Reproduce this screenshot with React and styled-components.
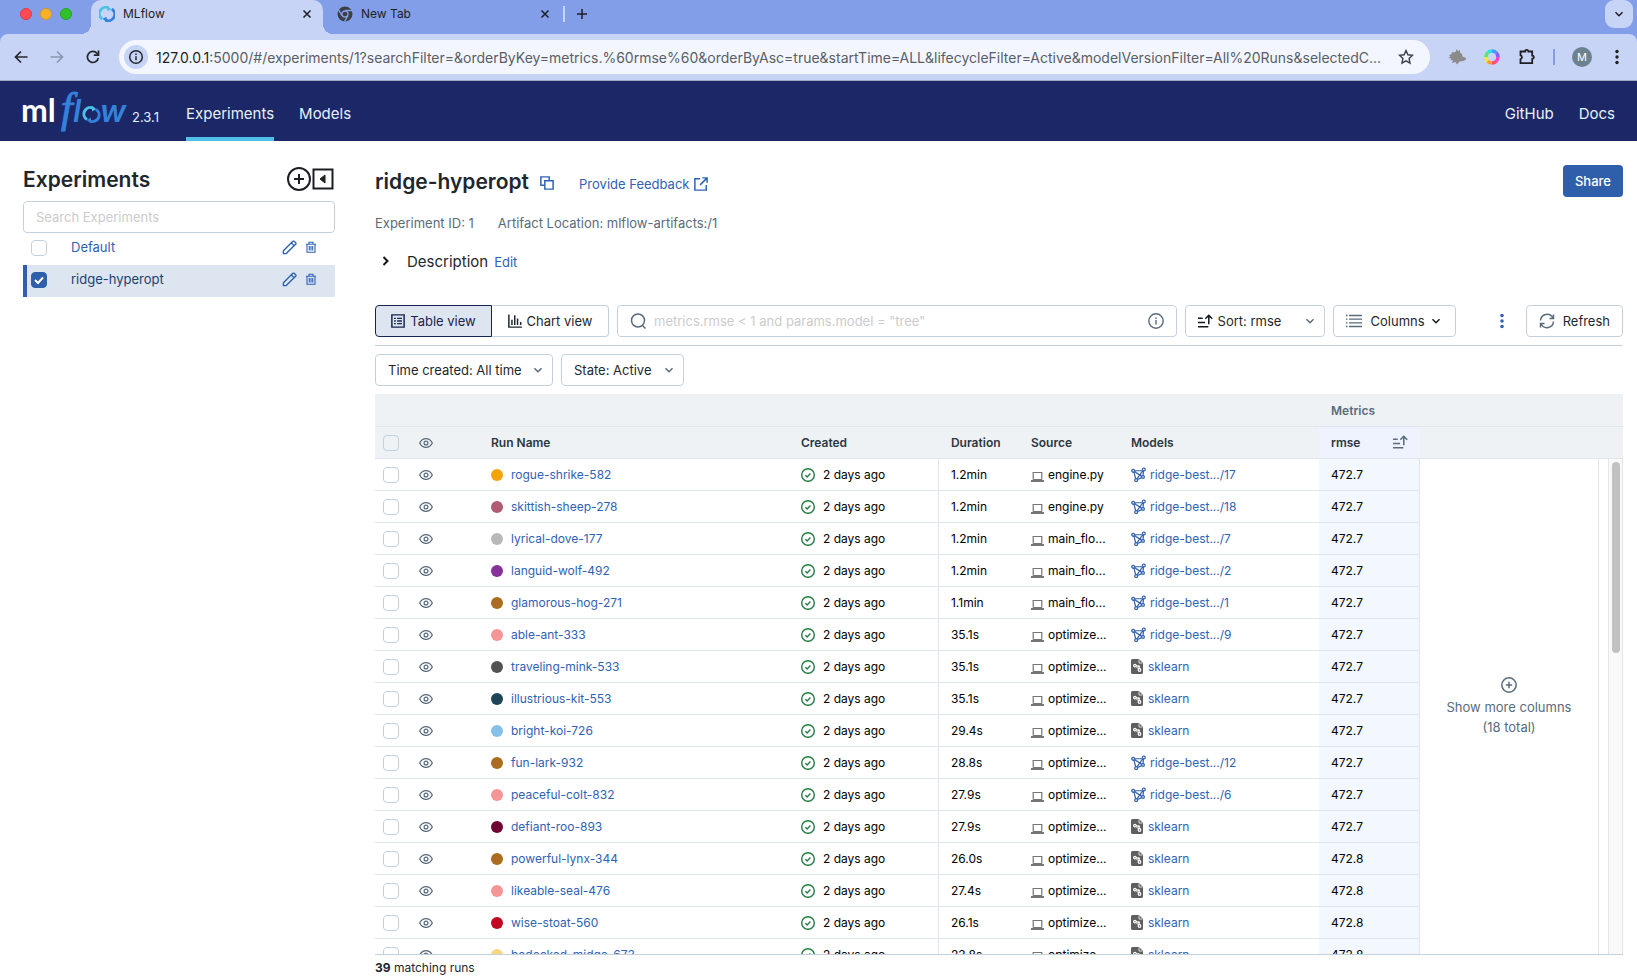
import React from 'react';
import styled, { createGlobalStyle, css } from 'styled-components';

const c = {
  navy: '#1b2766',
  link: '#2f62b4',
  blue: '#2f5faa',
  border: '#c3d1df',
  line: '#dfe6ed',
  head: '#eef2f5',
  gray: '#5a6b7c',
  text: '#1f272d',
  logoBlue: '#3581dc',
  logoCyan: '#4fc0e8',
};

const GlobalStyle = createGlobalStyle`
  * { box-sizing: border-box; }
  html, body { margin: 0; background: #fff; }
  body, button, input, select {
    font-family: Inter, "Liberation Sans", sans-serif;
    font-size: 13px;
    color: ${c.text};
  }
  button { background: none; border: 0; padding: 0; display: inline-flex; align-items: center; }
  a { color: ${c.link}; text-decoration: none; }
  svg { display: block; flex: none; }
  h1, h2, p { margin: 0; }
`;

/* ---------- browser frame ---------- */

const Page = styled.div`
  height: 100vh;
  display: flex;
  flex-direction: column;
  overflow: hidden;
`;

const TabStrip = styled.div`
  height: 34px;
  flex: none;
  background: #839ee8;
  display: flex;
  align-items: stretch;
  padding-right: 4px;
`;

const WindowLights = styled.div`
  width: 91px;
  display: flex;
  gap: 8px;
  padding: 8px 0 0 20px;
`;

const Light = styled.span`
  width: 12px;
  height: 12px;
  border-radius: 50%;
  background: ${(p) => p.$fill};
  border: 1px solid ${(p) => p.$edge};
`;

const Tab = styled.div`
  position: relative;
  display: flex;
  align-items: center;
  gap: 8px;
  height: 34px;
  padding: 0 10px 6px 8px;
  width: ${(p) => (p.$active ? 232 : 238)}px;
  ${(p) =>
    p.$active
      ? css`
          background: #c8d4f6;
          border-radius: 10px 10px 0 0;
          &::before,
          &::after {
            content: '';
            position: absolute;
            bottom: 0;
            width: 10px;
            height: 10px;
          }
          &::before {
            left: -10px;
            background: radial-gradient(circle at 0 0, transparent 10px, #c8d4f6 10px);
          }
          &::after {
            right: -10px;
            background: radial-gradient(circle at 100% 0, transparent 10px, #c8d4f6 10px);
          }
        `
      : css`
          padding-left: 14px;
        `}
`;

const TabTitle = styled.span`
  flex: 1;
  font-size: 12px;
  line-height: 16px;
  padding-bottom: 1px;
  color: #202124;
`;

const NewTab = styled.div`
  display: flex;
  align-items: center;
  gap: 10px;
  padding-bottom: 6px;
  flex: 1;
  margin-left: 2px;
`;

const Divider = styled.span`
  width: 2px;
  height: 16px;
  background: ${(p) => p.$color};
`;

const TabSearch = styled.button`
  width: 28px;
  height: 28px;
  border-radius: 9px;
  background: #c8d4f6;
  justify-content: center;
`;

const ToolbarBack = styled.div`
  background: #839ee8;
  flex: none;
`;

const BrowserBar = styled.div`
  height: 47px;
  background: #c8d4f6;
  border-bottom: 1px solid #9aa6c2;
  border-radius: 8px 8px 0 0;
  display: flex;
  align-items: center;
  padding: 0 12px 0 13px;
`;

const NavButtons = styled.div`
  display: flex;
  gap: 20px;
  width: 106px;
`;

const AddressBar = styled.div`
  flex: 1;
  min-width: 0;
  height: 34px;
  border-radius: 17px;
  background: #f3f6fe;
  display: flex;
  align-items: center;
  padding: 0 16px 0 5px;
`;

const SiteInfo = styled.button`
  width: 24px;
  height: 24px;
  border-radius: 50%;
  background: #c8d4f6;
  justify-content: center;
  flex: none;
`;

const Url = styled.div`
  flex: 1;
  min-width: 0;
  overflow: hidden;
  white-space: nowrap;
  margin: 0 8px;
  font-size: 14px;
  color: #5a5e66;
  b { font-weight: 400; color: #1d1f23; }
`;

const Extensions = styled.div`
  display: flex;
  align-items: center;
  gap: 17px;
  margin-left: 18px;
`;

const Avatar = styled.button`
  width: 20px;
  height: 20px;
  border-radius: 50%;
  background: #6d8290;
  color: #fff;
  font-size: 11px;
  justify-content: center;
`;

/* ---------- MLflow header ---------- */

const Header = styled.header`
  height: 60px;
  flex: none;
  background: ${c.navy};
  display: flex;
  align-items: stretch;
  padding: 0 22px;
`;

const Brand = styled.a`
  display: flex;
  align-items: flex-end;
  gap: 2px;
  width: 164px;
  padding-bottom: 4px;
`;

const Version = styled.span`
  font-size: 13px;
  line-height: 16px;
  color: #e7f1fb;
  padding-bottom: 12px;
`;

const Nav = styled.nav`
  display: flex;
  gap: 25px;
  &:last-child { margin-left: auto; }
`;

const NavLink = styled.a`
  display: flex;
  align-items: center;
  font-size: 15px;
  color: #e7f1fb;
  padding-top: 8px;
  border-bottom: 4px solid ${(p) => (p.$active ? c.logoCyan : 'transparent')};
`;

/* ---------- sidebar ---------- */

const Body = styled.div`
  flex: 1;
  min-height: 0;
  display: flex;
`;

const Sidebar = styled.aside`
  width: 335px;
  flex: none;
  padding: 24px 0 0 23px;
`;

const SidebarHead = styled.div`
  display: flex;
  align-items: center;
  height: 28px;
  margin-bottom: 8px;
  padding-right: 1px;
  h2 { flex: 1; font-size: 21px; font-weight: 600; line-height: 28px; padding-top: 2px; }
  button + button { margin-left: 1px; }
`;

const inputBox = css`
  height: 32px;
  border: 1px solid ${c.border};
  border-radius: 4px;
  background: #fff;
`;

const SearchExperiments = styled.input`
  ${inputBox}
  display: block;
  width: 100%;
  padding: 0 12px;
  &::placeholder { color: #ccc; opacity: 1; }
`;

const Checkbox = styled.input.attrs({ type: 'checkbox' })`
  appearance: none;
  display: block;
  flex: none;
  width: 16px;
  height: 16px;
  margin: 0;
  border: 1px solid ${c.border};
  border-radius: 4px;
  &:checked {
    border-color: ${c.blue};
    background: ${c.blue};
  }
`;

const CheckHolder = styled.span`
  position: relative;
  display: block;
  svg { position: absolute; left: 0; top: 0; pointer-events: none; }
`;

const ExperimentRow = styled.div`
  display: flex;
  align-items: center;
  height: 32px;
  padding: 0 18px 2px 4px;
  border-left: 4px solid ${(p) => (p.$active ? c.blue : 'transparent')};
  background: ${(p) => (p.$active ? '#dde5f0' : 'transparent')};
  a, button { padding-bottom: 2px; }
  a {
    flex: 1;
    margin-left: 24px;
    color: ${(p) => (p.$active ? '#1c4170' : c.link)};
  }
  button + button { margin-left: 8px; }
`;

/* ---------- experiment page ---------- */

const Main = styled.main`
  flex: 1;
  min-width: 0;
  display: flex;
  flex-direction: column;
  padding: 24px 14px 0 40px;
`;

const TitleRow = styled.div`
  display: flex;
  align-items: center;
  height: 32px;
  h1 { font-size: 21px; font-weight: 600; line-height: 30px; padding-top: 2px; margin-right: 11px; }
`;

const CopyButton = styled.button`
  padding-top: 4px;
`;

const Feedback = styled.a`
  display: flex;
  align-items: center;
  gap: 5px;
  margin-left: 25px;
  padding-top: 6px;
`;

const Share = styled.button`
  height: 32px;
  padding: 0 12px;
  margin-left: auto;
  border-radius: 4px;
  background: ${c.blue};
  color: #fff;
  font-weight: 500;
`;

const Meta = styled.div`
  display: flex;
  gap: 24px;
  margin-top: 16px;
  line-height: 20px;
  color: ${c.gray};
`;

const Description = styled.div`
  display: flex;
  align-items: center;
  height: 24px;
  margin: 16px 0 32px;
  h2 { font-size: 15px; font-weight: 400; margin: 0 6px 0 12px; }
  button { padding-left: 4px; }
  a { padding-top: 2px; }
`;

const Toolbar = styled.div`
  display: flex;
  gap: 8px;
  padding-bottom: 8px;
  border-bottom: 1px solid ${c.border};
`;

const Filters = styled.div`
  display: flex;
  gap: 8px;
  padding: 8px 0;
`;

const ViewSwitch = styled.div`
  display: flex;
`;

const ViewButton = styled.button`
  ${inputBox}
  justify-content: center;
  gap: 5px;
  width: 117px;
  border-radius: 4px 0 0 4px;
  ${(p) =>
    p.$active
      ? css`
          background: #dde5f0;
          border-color: #17264f;
          color: #17264f;
        `
      : css`
          border-left: 0;
          border-radius: 0 4px 4px 0;
        `}
`;

const RunSearch = styled.label`
  ${inputBox}
  flex: 1;
  display: flex;
  align-items: center;
  padding: 0 12px;
  input {
    flex: 1;
    min-width: 0;
    border: 0;
    outline: 0;
    padding: 0 8px;
    background: none;
  }
  input::placeholder { color: #ccc; opacity: 1; }
`;

const SelectBox = styled.label`
  ${inputBox}
  display: flex;
  align-items: center;
  gap: 5px;
  padding: 0 8px 0 12px;
  width: ${(p) => p.$width}px;
  select {
    appearance: none;
    flex: 1;
    min-width: 0;
    border: 0;
    padding: 0;
    background: none;
    outline: 0;
  }
`;

const ToolButton = styled.button`
  ${inputBox}
  gap: 8px;
  padding: 0 12px;
`;

const ColumnsButton = styled(ToolButton)`
  gap: 9px;
  padding-right: 13px;
  svg:last-child { margin-left: -4px; }
`;

const MoreButton = styled.button`
  width: 54px;
  justify-content: center;
  padding-left: 22px;
`;

/* ---------- runs grid ---------- */

const Grid = styled.div`
  flex: 1;
  min-height: 0;
  display: flex;
  overflow: hidden;
  border-bottom: 1px solid ${c.border};
`;

const TableArea = styled.div`
  flex: 1;
  min-width: 0;
`;

const RunsTable = styled.table`
  width: 100%;
  table-layout: fixed;
  border-collapse: separate;
  border-spacing: 0;
  font-size: 12px;
  th, td {
    height: 32px;
    padding: 0 12px;
    text-align: left;
    white-space: nowrap;
    overflow: hidden;
    border-bottom: 1px solid ${c.line};
  }
  th { background: ${c.head}; font-weight: 600; color: #2d373f; }
  td { color: #000; }
  td button { display: flex; }
`;

const GroupRow = styled.tr`
  && th { height: 33px; color: ${c.gray}; }
`;

const CheckTh = styled.th`
  && { padding: 0 8px; }
`;

const CheckTd = styled.td`
  && { padding: 0 8px; }
`;

const CreatedTd = styled.td`
  && { border-right: 1px solid ${c.line}; }
`;

const MetricTh = styled.th`
  && { background: #eef3fd; }
  > div { display: flex; justify-content: space-between; align-items: center; }
`;

const MetricTd = styled.td`
  && { background: #f3f8fe; border-right: 1px solid ${c.line}; }
`;

const Cell = styled.div`
  display: flex;
  align-items: center;
  gap: ${(p) => p.$gap}px;
`;

const Dot = styled.span`
  width: 12px;
  height: 12px;
  border-radius: 50%;
  background: ${(p) => p.$color};
`;

const Side = styled.div`
  width: 203px;
  flex: none;
  display: flex;
  flex-direction: column;
`;

const SideHead = styled.div`
  height: ${(p) => (p.$group ? 33 : 32)}px;
  flex: none;
  background: ${c.head};
  border-bottom: 1px solid ${c.line};
`;

const SideBody = styled.div`
  flex: 1;
  display: flex;
`;

const MoreColumns = styled.button`
  width: 179px;
  flex-direction: column;
  justify-content: center;
  gap: 4px;
  border-right: 1px solid ${c.line};
  line-height: 20px;
  color: ${c.gray};
`;

const ScrollTrack = styled.div`
  width: 15px;
  margin-left: auto;
  padding: 3px 2px 0 3px;
  background: #f9f9f9;
  border: solid #e6e6e6;
  border-width: 0 1px;
`;

const ScrollThumb = styled.div`
  width: 8px;
  border-radius: 4px;
  background: #c1c1c1;
`;

const Footer = styled.footer`
  height: 22px;
  flex: none;
  font-size: 12px;
  line-height: 26px;
`;

/* ---------- icons ---------- */

const Icon = ({ size = 16, box = 16, color = 'currentColor', width = 1.5, children, ...rest }) => (
  <svg width={size} height={size} viewBox={`0 0 ${box} ${box}`} fill="none" stroke={color} strokeWidth={width} aria-hidden="true" {...rest}>
    {children}
  </svg>
);

const Chevron = ({ color = c.gray, size = 12 }) => (
  <Icon size={size} box={12} color={color}><path d="M2.500 4.200 6 7.700l3.500-3.500" /></Icon>
);
const CloseIcon = () => <Icon size={12} box={12} color="#1d1f23"><path d="m2.500 2.500 7 7m0-7-7 7" /></Icon>;
const SortIcon = ({ color = '#11171c' }) => (
  <Icon size={15} color={color} width={1.600}><path d="M0 4.500h5M0 9h7.500M0 13.500h11M11.500 11V1.500M7.800 5l3.700-3.700L15.200 5" /></Icon>
);
const EyeIcon = () => (
  <Icon size={14} color={c.gray} width={1.400}>
    <path d="M.8 8C2.300 4.800 5 3 8 3s5.700 1.800 7.200 5c-1.500 3.200-4.200 5-7.200 5S2.300 11.200.8 8Z" />
    <circle cx="8" cy="8" r="2.200" />
  </Icon>
);
const PencilIcon = () => (
  <Icon size={15} color={c.link} width={1.500}>
    <path d="M1.500 14.500v-3L11 2l.6-.5c.5-.4 1.100-.4 1.600 0l1.300 1.300c.5.5.5 1.200 0 1.700L4.500 14.500h-3ZM10 3.200 12.800 6" />
  </Icon>
);
const TrashIcon = () => (
  <Icon size={12} box={12} color={c.link} width={1.100}>
    <path d="M1 3.200h10M4 3V1.200h4V3M2 3.200v8h8v-8M4.300 5v4.500M6 5v4.500M7.700 5v4.500" />
  </Icon>
);
const CheckCircle = () => (
  <Icon size={14} color="#277c43" width={1.600}><circle cx="8" cy="8" r="7.200" /><path d="m5 8.200 2 2 3.800-4" /></Icon>
);
const LaptopIcon = () => (
  <svg width="13" height="15" viewBox="0 -3 13 15" fill="none" stroke="#757575" aria-hidden="true">
    <path d="M2.200 9.500V2.500h8.600v7" strokeWidth="1.200" />
    <path d="M0 11h13" strokeWidth="2" />
    <path d="M2 9.500h9" strokeWidth="1" />
  </svg>
);
const ModelIcon = () => (
  <Icon size={15} color={c.link} width={1.300}>
    <path d="M4 4h8.200M3 5.200l2 7.300M12.600 4 6.500 12.500M13.300 4.200l-.5 5M4 5l7.500 5M11.300 11.300 7 13.300" />
    <circle cx="2.300" cy="4" r="1.500" /><circle cx="13.700" cy="2.600" r="1.500" />
    <circle cx="5.500" cy="14" r="1.500" /><circle cx="12.800" cy="10.700" r="1.500" />
  </Icon>
);
const SklearnIcon = () => (
  <svg width="12" height="15" viewBox="0 0 12 15" aria-hidden="true">
    <path d="M1.500 0H8l4 4v9.500c0 .8-.7 1.500-1.500 1.500h-9C.7 15 0 14.300 0 13.500v-12C0 .7.7 0 1.500 0Z" fill="#5f5f5f" />
    <path d="M8 .5V4h3.500" stroke="#fff" strokeWidth=".8" fill="none" />
    <path d="m4 6.500 4.500 4.500M4 6.500l4 .8.5 3.700" stroke="#fff" strokeWidth="1" fill="none" />
    <circle cx="3.900" cy="6.600" r="1.900" fill="#fff" /><circle cx="8.500" cy="11" r="1.900" fill="#fff" />
    <circle cx="7.800" cy="7.400" r="1.100" fill="#fff" /><circle cx="3.900" cy="6.600" r=".7" fill="#5f5f5f" />
    <circle cx="8.500" cy="11" r=".7" fill="#5f5f5f" />
  </svg>
);
const PlusCircle = () => (
  <Icon color={c.gray}><circle cx="8" cy="8" r="7.200" /><path d="M8 4.800v6.400M4.800 8h6.400" /></Icon>
);
const RingArrows = ({ size }) => (
  <Icon size={size} width={2.800}>
    <path d="M3.200 13A6.400 6.400 0 0 1 9.500 1.900" stroke={c.logoCyan} />
    <path d="m8.500 0 4 3.200-4.200 2Z" fill={c.logoCyan} stroke="none" />
    <path d="M12.800 3A6.400 6.400 0 0 1 6.500 14.100" stroke={c.logoBlue} />
    <path d="m7.500 16-4-3.200 4.200-2Z" fill={c.logoBlue} stroke="none" />
  </Icon>
);

const Logo = () => (
  <svg width="108" height="56" viewBox="0 -8 108 56" role="img" aria-label="MLflow">
    <g fill={c.logoBlue} fontFamily="Inter, sans-serif">
      <text x="-1" y="33" fontFamily="Lato, sans-serif" fontWeight="700" fontSize="32" fill="#fff">ml</text>
      <text x="39" y="33" fontFamily="Liberation Serif, serif" fontStyle="italic" fontSize="42" stroke={c.logoBlue} strokeWidth="1">f</text>
      <text x="51" y="33" fontStyle="italic" fontWeight="600" fontSize="31">l</text>
      <text x="78" y="33" fontStyle="italic" fontWeight="600" fontSize="31">w</text>
    </g>
    <g transform="translate(61 17)" fill="none" strokeWidth="3">
      <path d="M4 13.500A6.500 6.500 0 0 1 10 2" stroke={c.logoCyan} />
      <path d="m9 0 4.500 3L9 5.500Z" fill={c.logoCyan} />
      <path d="M13 3.500A6.500 6.500 0 0 1 7 15" stroke={c.logoBlue} />
      <path d="M8 17.200 3.500 14 8 11.500Z" fill={c.logoBlue} />
    </g>
  </svg>
);

const extensionHues = ['#ff4f6d', '#ff3fd0', '#8a5bff', '#3f9bff', '#30e0e0', '#57e86b', '#f5e53a', '#ff9d2f'];
const RainbowRing = () => (
  <svg width="18" height="18" viewBox="0 0 18 18" aria-hidden="true" fill="none" strokeWidth="3.500">
    {extensionHues.map((hue, i) => (
      <path key={hue} d="M9 15A6 6 0 0 0 13.240 13.240" stroke={hue} transform={`rotate(${i * -45} 9 9)`} />
    ))}
  </svg>
);

/* ---------- data ---------- */

const runs = [
  ['rogue-shrike-582', '#f5a30c', '1.2min', 'engine.py', 'ridge-best.../17', '472.7'],
  ['skittish-sheep-278', '#b05c74', '1.2min', 'engine.py', 'ridge-best.../18', '472.7'],
  ['lyrical-dove-177', '#b8b8b8', '1.2min', 'main_flo...', 'ridge-best.../7', '472.7'],
  ['languid-wolf-492', '#853299', '1.2min', 'main_flo...', 'ridge-best.../2', '472.7'],
  ['glamorous-hog-271', '#aa6d20', '1.1min', 'main_flo...', 'ridge-best.../1', '472.7'],
  ['able-ant-333', '#f59597', '35.1s', 'optimize...', 'ridge-best.../9', '472.7'],
  ['traveling-mink-533', '#535353', '35.1s', 'optimize...', 'sklearn', '472.7'],
  ['illustrious-kit-553', '#1d4555', '35.1s', 'optimize...', 'sklearn', '472.7'],
  ['bright-koi-726', '#86c0e9', '29.4s', 'optimize...', 'sklearn', '472.7'],
  ['fun-lark-932', '#aa6d20', '28.8s', 'optimize...', 'ridge-best.../12', '472.7'],
  ['peaceful-colt-832', '#f59597', '27.9s', 'optimize...', 'ridge-best.../6', '472.7'],
  ['defiant-roo-893', '#6d0434', '27.9s', 'optimize...', 'sklearn', '472.7'],
  ['powerful-lynx-344', '#aa6d20', '26.0s', 'optimize...', 'sklearn', '472.8'],
  ['likeable-seal-476', '#f59597', '27.4s', 'optimize...', 'sklearn', '472.8'],
  ['wise-stoat-560', '#c00620', '26.1s', 'optimize...', 'sklearn', '472.8'],
  ['bedecked-midge-673', '#f9d580', '23.8s', 'optimize...', 'sklearn', '472.8'],
];

const thumbHeight = 191;

/* ---------- page parts ---------- */

const Browser = () => (
  <>
    <TabStrip>
      <WindowLights>
        <Light $fill="#fe4b50" $edge="#dd3b45" />
        <Light $fill="#f6b32a" $edge="#d6952a" />
        <Light $fill="#2fc22d" $edge="#27a327" />
      </WindowLights>
      <Tab $active>
        <RingArrows size={16} />
        <TabTitle>MLflow</TabTitle>
        <button aria-label="Close MLflow tab"><CloseIcon /></button>
      </Tab>
      <Tab>
        <svg width="16" height="16" viewBox="0 0 16 16" aria-hidden="true">
          <circle cx="8" cy="8" r="7.500" fill="#3c4043" />
          <circle cx="8" cy="8" r="3" fill="#3c4043" stroke="#839ee8" strokeWidth="1.300" />
          <path d="M8 4.500h7M5 9.700 1.500 3.700M11 9.700l-3.500 6" stroke="#839ee8" strokeWidth="1.300" />
        </svg>
        <TabTitle>New Tab</TabTitle>
        <button aria-label="Close new tab"><CloseIcon /></button>
      </Tab>
      <NewTab>
        <Divider $color="#c8d4f6" />
        <button aria-label="New tab">
          <Icon size={14} box={14} color="#1d1f23"><path d="M7 2v10M2 7h10" /></Icon>
        </button>
      </NewTab>
      <TabSearch aria-label="Search tabs"><Chevron color="#1d1f23" /></TabSearch>
    </TabStrip>
    <ToolbarBack>
      <BrowserBar>
        <NavButtons>
          <button aria-label="Back"><Icon color="#24272c" width={1.700}><path d="M14.500 8H2.500M8 2.500 2.500 8 8 13.500" /></Icon></button>
          <button aria-label="Forward"><Icon color="#8c97b3" width={1.700}><path d="M1.500 8h12M8 2.500 13.500 8 8 13.500" /></Icon></button>
          <button aria-label="Reload">
            <Icon color="#24272c" width={1.700}><path d="M13.300 9A5.500 5.500 0 1 1 12 4.300l1.300 1.400" /><path d="M13.500 1.500v4.700H8.800" /></Icon>
          </button>
        </NavButtons>
        <AddressBar>
          <SiteInfo aria-label="Site information">
            <Icon color="#24272c"><circle cx="8" cy="8" r="6.300" /><path d="M8 7.300v4M8 4.400V6" /></Icon>
          </SiteInfo>
          <Url role="textbox" aria-label="Address" tabIndex={0}>
            <b>127.0.0.1</b>:5000/#/experiments/1?searchFilter=&amp;orderByKey=metrics.%60rmse%60&amp;orderByAsc=true&amp;startTime=ALL&amp;lifecycleFilter=Active&amp;modelVersionFilter=All%20Runs&amp;selectedC...
          </Url>
          <button aria-label="Bookmark">
            <Icon color="#3c4043" width={1.400}><path d="m8 1.500 1.900 4.300 4.600.5-3.400 3.200.9 4.700L8 11.800l-4 2.400.9-4.700L1.500 6.300l4.600-.5Z" /></Icon>
          </button>
        </AddressBar>
        <Extensions>
          <svg width="18" height="16" viewBox="0 0 18 16" aria-hidden="true">
            <path d="M1 6.500 3.500 5 4 3l2 .5L8 2.500 8.500 0l1.500 2 2-1v2.500l2 1.500.5 2.500L18 9v1.500L15.500 12l-4 .5L9 15.500 7.500 13 4 14l1-2.500L2.500 11l1-1.500L0 9l2.500-1Z" fill="#8b8b8b" />
          </svg>
          <RainbowRing />
          <button aria-label="Extensions">
            <Icon size={18} box={18} color="#1d1f23" width={1.800}>
              <path d="M3 3.500h4.200a1.600 1.600 0 0 1 3.200 0h3.800v4.200a1.600 1.600 0 0 1 0 3.200v4.300H2.500v-4.100a1.900 1.900 0 0 0 0-3.700V3.500Z" />
            </Icon>
          </button>
          <Divider $color="#839ee8" />
          <Avatar aria-label="Profile">M</Avatar>
          <button aria-label="Browser menu">
            <Icon color="none"><g fill="#1d1f23"><circle cx="8" cy="2.500" r="1.700" /><circle cx="8" cy="8" r="1.700" /><circle cx="8" cy="13.500" r="1.700" /></g></Icon>
          </button>
        </Extensions>
      </BrowserBar>
    </ToolbarBack>
  </>
);

const Experiment = ({ name, active }) => (
  <ExperimentRow $active={active}>
    <CheckHolder>
      <Checkbox aria-label={name} defaultChecked={active} />
      {active && <Icon color="#fff" width={2}><path d="m4 8 3 3 5-5.500" /></Icon>}
    </CheckHolder>
    <a href="#experiment">{name}</a>
    <button aria-label={`Rename ${name}`}><PencilIcon /></button>
    <button aria-label={`Delete ${name}`}><TrashIcon /></button>
  </ExperimentRow>
);

const RunRow = ({ run: [name, color, duration, source, model, rmse] }) => (
  <tr>
    <CheckTd><Checkbox aria-label={`Select ${name}`} /></CheckTd>
    <td><button aria-label={`Toggle ${name}`}><EyeIcon /></button></td>
    <td><Cell $gap={8}><Dot $color={color} /><a href="#run">{name}</a></Cell></td>
    <CreatedTd><Cell $gap={8}><CheckCircle />2 days ago</Cell></CreatedTd>
    <td>{duration}</td>
    <td><Cell $gap={4}><LaptopIcon />{source}</Cell></td>
    <td>
      <Cell $gap={model === 'sklearn' ? 5 : 4}>
        {model === 'sklearn' ? <SklearnIcon /> : <ModelIcon />}
        <a href="#model">{model}</a>
      </Cell>
    </td>
    <MetricTd>{rmse}</MetricTd>
  </tr>
);

export default function App() {
  return (
    <Page>
      <GlobalStyle />
      <Browser />
      <Header>
        <Brand href="#home"><Logo /><Version>2.3.1</Version></Brand>
        <Nav>
          <NavLink href="#experiments" $active>Experiments</NavLink>
          <NavLink href="#models">Models</NavLink>
        </Nav>
        <Nav>
          <NavLink href="#github">GitHub</NavLink>
          <NavLink href="#docs">Docs</NavLink>
        </Nav>
      </Header>
      <Body>
        <Sidebar>
          <SidebarHead>
            <h2>Experiments</h2>
            <button aria-label="New experiment">
              <Icon size={24} box={24} color="#1d1f23" width={2}><circle cx="12" cy="12" r="11" /><path d="M12 7v10M7 12h10" /></Icon>
            </button>
            <button aria-label="Collapse sidebar">
              <Icon size={22} box={22} color="#1d1f23" width={2}><path d="M1.500 1.500h19v19h-19Z" /><path d="M13 7v8l-5-4Z" fill="#1d1f23" strokeWidth="1" /></Icon>
            </button>
          </SidebarHead>
          <SearchExperiments aria-label="Search Experiments" placeholder="Search Experiments" />
          <Experiment name="Default" />
          <Experiment name="ridge-hyperopt" active />
        </Sidebar>
        <Main>
          <TitleRow>
            <h1>ridge-hyperopt</h1>
            <CopyButton aria-label="Copy name">
              <Icon size={14} color={c.link} width={1.700}><path d="M5 10.500H1V1h9.500v4" /><path d="M5.500 5.500H15V15H5.500Z" /></Icon>
            </CopyButton>
            <Feedback href="#feedback">
              Provide Feedback
              <Icon size={14} color={c.link} width={1.700}><path d="M7 2H1v13h13V9M9.500 1H15v5.500M15 1 7 9" /></Icon>
            </Feedback>
            <Share>Share</Share>
          </TitleRow>
          <Meta>
            <span>Experiment ID: 1</span>
            <span>Artifact Location: mlflow-artifacts:/1</span>
          </Meta>
          <Description>
            <button aria-label="Expand description">
              <Icon color="#11171c" width={2}><path d="m4.500 4 4 4-4 4" /></Icon>
            </button>
            <h2>Description</h2>
            <a href="#edit">Edit</a>
          </Description>
          <Toolbar>
            <ViewSwitch>
              <ViewButton $active>
                <Icon size={14} width={1.700}><path d="M1 1h14v14H1ZM3.500 5h2M7 5h5.500M3.500 8h2M7 8h5.500M3.500 11h2M7 11h5.500" /></Icon>
                Table view
              </ViewButton>
              <ViewButton>
                <Icon size={14} width={1.700}><path d="M1 .5V15h15M4.500 12.500V6.500M7.700 12.500V1.500M10.900 12.500V5M14.500 12.500V9" /></Icon>
                Chart view
              </ViewButton>
            </ViewSwitch>
            <RunSearch>
              <Icon color={c.gray}><circle cx="8" cy="7.500" r="6.500" /><path d="m12.500 12.500 3 3" /></Icon>
              <input aria-label="Filter runs" placeholder={'metrics.rmse < 1 and params.model = "tree"'} />
              <Icon color={c.gray} width={1.400}><circle cx="8" cy="8" r="7.200" /><path d="M8 7v4.500M8 4.500V6" /></Icon>
            </RunSearch>
            <SelectBox $width={140}>
              <SortIcon />
              <select aria-label="Sort"><option>Sort: rmse</option></select>
              <Chevron />
            </SelectBox>
            <ColumnsButton>
              <Icon color={c.gray} width={1.300}><path d="M0 2.500h1.500M3 2.500h13M0 6.200h1.500M3 6.200h13M0 9.900h1.500M3 9.900h13M0 13.500h1.500M3 13.500h13" /></Icon>
              Columns
              <Chevron color="#11171c" />
            </ColumnsButton>
            <MoreButton aria-label="More actions">
              <Icon color="none"><g fill={c.link}><circle cx="8" cy="2.500" r="1.800" /><circle cx="8" cy="8" r="1.800" /><circle cx="8" cy="13.500" r="1.800" /></g></Icon>
            </MoreButton>
            <ToolButton>
              <Icon color={c.gray}><path d="M1.500 7.500A6.500 6.500 0 0 1 13.800 5M14.500 1.500V5.500h-4M14.500 8.500A6.500 6.500 0 0 1 2.200 11M1.500 14.500v-4h4" /></Icon>
              Refresh
            </ToolButton>
          </Toolbar>
          <Filters>
            <SelectBox $width={178}>
              <select aria-label="Time created"><option>Time created: All time</option></select>
              <Chevron />
            </SelectBox>
            <SelectBox $width={123}>
              <select aria-label="State"><option>State: Active</option></select>
              <Chevron />
            </SelectBox>
          </Filters>
          <Grid>
            <TableArea>
              <RunsTable>
                <colgroup>
                  <col width="32" /><col width="72" /><col /><col width="150" />
                  <col width="80" /><col width="100" /><col width="200" /><col width="101" />
                </colgroup>
                <thead>
                  <GroupRow><th colSpan="7" aria-label="Attributes" /><th>Metrics</th></GroupRow>
                  <tr>
                    <CheckTh><Checkbox aria-label="Select all runs" /></CheckTh>
                    <th><EyeIcon /></th>
                    <th>Run Name</th>
                    <th>Created</th>
                    <th>Duration</th>
                    <th>Source</th>
                    <th>Models</th>
                    <MetricTh><div>rmse<SortIcon color={c.gray} /></div></MetricTh>
                  </tr>
                </thead>
                <tbody>{runs.map((run) => <RunRow key={run[0]} run={run} />)}</tbody>
              </RunsTable>
            </TableArea>
            <Side>
              <SideHead $group />
              <SideHead />
              <SideBody>
                <MoreColumns>
                  <PlusCircle />
                  <span>Show more columns<br />(18 total)</span>
                </MoreColumns>
                <ScrollTrack><ScrollThumb style={{ height: thumbHeight }} /></ScrollTrack>
              </SideBody>
            </Side>
          </Grid>
          <Footer><b>39</b> matching runs</Footer>
        </Main>
      </Body>
    </Page>
  );
}
